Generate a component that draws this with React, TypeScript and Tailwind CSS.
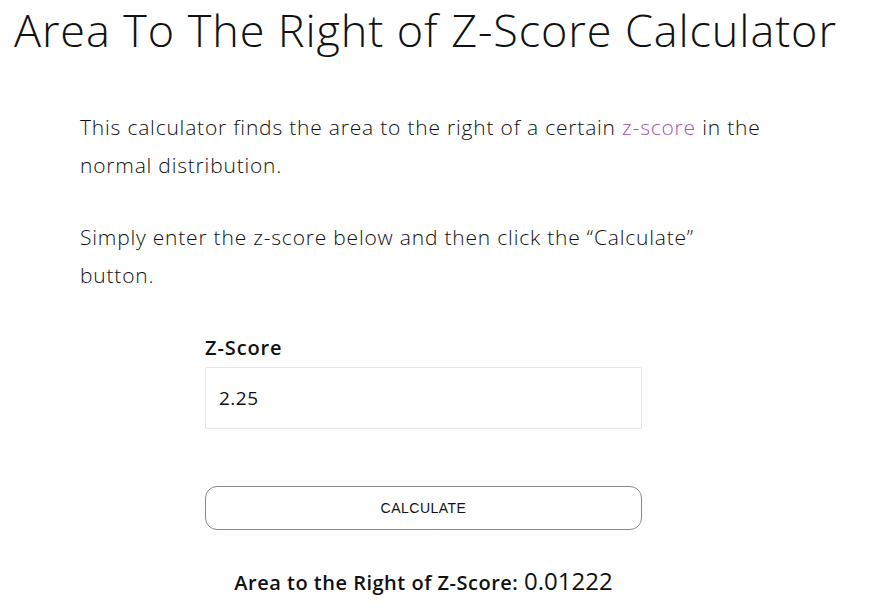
import React, { useState } from 'react';

const font = { fontFamily: "'Open Sans', Lato, sans-serif" };

export default function App() {
  const [z, setZ] = useState('2.25');

  return (
    <div className="min-h-screen bg-white text-[#111]" style={font}>
      <h1 className="pl-[14px] pt-[3px] text-[45px] leading-[54px] font-light tracking-[0.9px]">
        Area To The Right of Z-Score Calculator
      </h1>

      <div className="ml-[80px] mt-[51px] w-[686px] text-[21px] leading-[38px] font-light tracking-[0.8px]">
        <p>
          This calculator finds the area to the right of a certain{' '}
          <a className="text-[#9b59b6]">z-score</a> in the normal distribution.
        </p>
        <p className="mt-[34px]">
          Simply enter the z-score below and then click the “Calculate” button.
        </p>
      </div>

      <div className="ml-[205px] w-[437px] pt-[40px]">
        <label className="block text-[20px] leading-[28px] font-semibold tracking-[0.9px]">Z-Score</label>
        <input
          value={z}
          onChange={(e) => setZ(e.target.value)}
          className="mt-[5px] block w-full h-[62px] border border-[#e6e6e6] rounded-[2px] px-[13px] text-[19px] tracking-[0.5px] outline-none"
        />
        <button
          className="mt-[57px] block w-full h-[44px] border border-[#8a8a8a] rounded-[12px] bg-white text-[14px] tracking-[0.5px]"
          style={{ fontFamily: "'Liberation Sans', Arial, sans-serif" }}
        >
          CALCULATE
        </button>
        <div className="mt-[33px] text-center">
          <span className="text-[20px] font-semibold tracking-[0.5px]">Area to the Right of Z-Score: </span>
          <span className="text-[24px]">0.01222</span>
        </div>
      </div>
    </div>
  );
}
